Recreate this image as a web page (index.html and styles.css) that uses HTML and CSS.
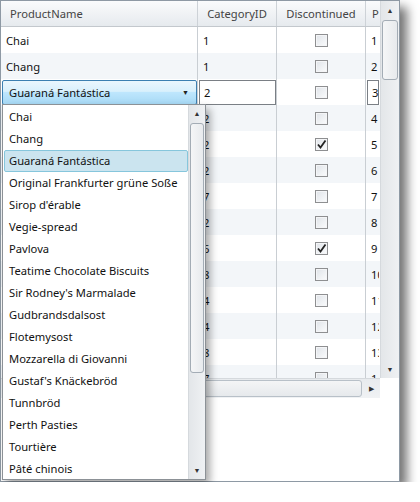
FILE: index.html
```html
<!DOCTYPE html>
<html>
<head>
<meta charset="utf-8">
<link rel="stylesheet" href="styles.css">
</head>
<body>
<div class="window">
  <div class="main">
    <div class="grid">
      <div class="row hdr">
        <div class="cell">ProductName</div>
        <div class="cell">CategoryID</div>
        <div class="cell">Discontinued</div>
        <div class="cell">ProductID</div>
      </div>
      <div class="row"><div class="cell">Chai</div><div class="cell">1</div><div class="cell chk"><span class="box"></span></div><div class="cell">1</div></div>
      <div class="row alt"><div class="cell">Chang</div><div class="cell">1</div><div class="cell chk"><span class="box"></span></div><div class="cell">2</div></div>
      <div class="row edit">
        <div class="cell combo-cell"><div class="combo"><span>Guaraná Fantástica</span><span class="arr">▼</span></div></div>
        <div class="cell tb-cell"><div class="tb">2</div></div>
        <div class="cell chk"><span class="box"></span></div>
        <div class="cell tb-cell"><div class="tb">3</div></div>
      </div>
      <div class="row alt"><div class="cell"></div><div class="cell">2</div><div class="cell chk"><span class="box"></span></div><div class="cell">4</div></div>
      <div class="row"><div class="cell"></div><div class="cell">2</div><div class="cell chk"><span class="box on"><svg viewBox="0 0 13 13" width="13" height="13"><path d="M3 6.5 L5.5 9.5 L10.5 2.5" fill="none" stroke="#222" stroke-width="1.8"/></svg></span></div><div class="cell">5</div></div>
      <div class="row alt"><div class="cell"></div><div class="cell">2</div><div class="cell chk"><span class="box"></span></div><div class="cell">6</div></div>
      <div class="row"><div class="cell"></div><div class="cell">7</div><div class="cell chk"><span class="box"></span></div><div class="cell">7</div></div>
      <div class="row alt"><div class="cell"></div><div class="cell">2</div><div class="cell chk"><span class="box"></span></div><div class="cell">8</div></div>
      <div class="row"><div class="cell"></div><div class="cell">6</div><div class="cell chk"><span class="box on"><svg viewBox="0 0 13 13" width="13" height="13"><path d="M3 6.5 L5.5 9.5 L10.5 2.5" fill="none" stroke="#222" stroke-width="1.8"/></svg></span></div><div class="cell">9</div></div>
      <div class="row alt"><div class="cell"></div><div class="cell">8</div><div class="cell chk"><span class="box"></span></div><div class="cell">10</div></div>
      <div class="row"><div class="cell"></div><div class="cell">4</div><div class="cell chk"><span class="box"></span></div><div class="cell">11</div></div>
      <div class="row alt"><div class="cell"></div><div class="cell">4</div><div class="cell chk"><span class="box"></span></div><div class="cell">12</div></div>
      <div class="row"><div class="cell"></div><div class="cell">8</div><div class="cell chk"><span class="box"></span></div><div class="cell">13</div></div>
      <div class="row alt"><div class="cell"></div><div class="cell">7</div><div class="cell chk"><span class="box"></span></div><div class="cell">14</div></div>
    </div>
    <div class="vscroll">
      <div class="btn">▲</div>
      <div class="thumb vthumb"></div>
      <div class="track"></div>
      <div class="btn">▼</div>
    </div>
  </div>
  <div class="hrow">
    <div class="hscroll"><div class="hthumb"></div><div class="hbtn">▶</div></div>
    <div class="corner"></div>
  </div>
  <div class="popup">
    <ul class="items">
      <li>Chai</li>
      <li>Chang</li>
      <li class="sel">Guaraná Fantástica</li>
      <li>Original Frankfurter grüne Soße</li>
      <li>Sirop d'érable</li>
      <li>Vegie-spread</li>
      <li>Pavlova</li>
      <li>Teatime Chocolate Biscuits</li>
      <li>Sir Rodney's Marmalade</li>
      <li>Gudbrandsdalsost</li>
      <li>Flotemysost</li>
      <li>Mozzarella di Giovanni</li>
      <li>Gustaf's Knäckebröd</li>
      <li>Tunnbröd</li>
      <li>Perth Pasties</li>
      <li>Tourtière</li>
      <li>Pâté chinois</li>
    </ul>
    <div class="pscroll">
      <div class="btn">▲</div>
      <div class="thumb pthumb"></div>
      <div class="track"></div>
      <div class="btn">▼</div>
    </div>
  </div>
</div>
</body>
</html>
```

FILE: styles.css
```css
* { box-sizing: border-box; }
html, body { margin: 0; padding: 0; background: #fff; }
body {
  font-family: "Noto Sans", "Open Sans", sans-serif;
  font-size: 11.2px;
  color: #111;
}
.window {
  position: relative;
  width: 400px;
  height: 482px;
  border: 1px solid #8e99a4;
  background: #fff;
  box-shadow: 7px 7px 10px rgba(0,0,0,0.55);
}
.main {
  display: flex;
  height: 377px;
}
.grid {
  width: 379px;
  overflow: hidden;
}
.row {
  display: grid;
  grid-template-columns: 197px 79px 89px 13px;
  height: 26px;
  background: #fff;
}
.row.alt { background: #f3f6f9; }
.cell {
  border-right: 1px solid #c9ced3;
  padding-left: 5px;
  display: flex;
  align-items: center;
  white-space: nowrap;
  overflow: hidden;
  color: #111;
}
.row .cell:nth-child(4) { border-right: 0; }
.hdr {
  background: linear-gradient(#fafbfc, #e6eaee);
  border-bottom: 1px solid #c3c8cd;
}
.hdr .cell { justify-content: center; padding-left: 0; border-right-color: #cdd2d7; color: #444; }
.hdr .cell:first-child { justify-content: flex-start; padding-left: 9px; }
.hdr .cell:last-child { justify-content: flex-start; padding-left: 6px; }
.chk { justify-content: center; padding-left: 0; }
.box {
  width: 13px;
  height: 13px;
  border: 1px solid #8e8f91;
  background: linear-gradient(135deg, #dfe3e8, #fbfcfd);
  box-shadow: inset 0 0 0 1px #f4f5f7;
  display: block;
  position: relative;
}
.box svg { position: absolute; left: -1px; top: -1px; }
.edit .cell { padding: 0; }
.combo-cell { padding: 1px 0 0 1px !important; }
.combo {
  width: 195px;
  height: 25px;
  border: 1px solid #3c7fb1;
  border-radius: 2px;
  background: linear-gradient(#eaf6fd 0%, #d9f0fc 45%, #bee6fd 50%, #a7d9f5 100%);
  display: flex;
  align-items: center;
  justify-content: space-between;
  padding: 0 7px 0 6px;
}
.arr { font-size: 7px; color: #222; }
.tb-cell { padding: 1px 0 0 1px !important; align-items: stretch !important; }
.tb {
  flex: 1;
  height: 25px;
  border: 1px solid #7a7f85;
  background: #fff;
  padding-left: 4px;
  display: flex;
  align-items: center;
}
.vscroll {
  width: 19px;
  display: flex;
  flex-direction: column;
  background: linear-gradient(90deg, #e3e6e9, #eff1f3);
  border-left: 1px solid #d5d9dd;
}
.btn {
  height: 18px;
  font-size: 7px;
  color: #333;
  display: flex;
  align-items: center;
  justify-content: center;
}
.thumb {
  margin: 1px 1px 0 1px;
  border: 1px solid #a3acb5;
  border-radius: 3px;
  background: linear-gradient(90deg, #f5f6f7, #e7eaed);
}
.vthumb { height: 60px; }
.track { flex: 1; }
.hrow { display: flex; height: 20px; }
.hscroll {
  width: 379px;
  display: flex;
  background: linear-gradient(#e8ebee, #f0f2f4);
  border-top: 1px solid #d5d9dd;
}
.hthumb {
  flex: 1;
  margin: 1px 0 1px 1px;
  border: 1px solid #b8c0c8;
  border-radius: 3px;
  background: linear-gradient(#f4f5f6, #e6e9ec);
}
.hbtn {
  width: 18px;
  font-size: 7px;
  color: #333;
  display: flex;
  align-items: center;
  justify-content: center;
}
.corner { width: 19px; background: #fff; }
.popup {
  position: absolute;
  left: 1px;
  top: 103px;
  width: 204px;
  height: 376px;
  border: 1px solid #8c9196;
  background: #fff;
  display: flex;
  box-shadow: 4px 5px 8px rgba(0,0,0,0.35);
}
.items {
  list-style: none;
  margin: 0;
  padding: 1px 0 0 1px;
  width: 185px;
  overflow: hidden;
}
.items li {
  height: 22px;
  line-height: 20px;
  padding-left: 4px;
  border: 1px solid transparent;
  white-space: nowrap;
}
.items li.sel {
  background: #cbe4ef;
  border-color: #86c6dc;
  border-radius: 2px;
}
.pscroll {
  width: 17px;
  display: flex;
  flex-direction: column;
  background: linear-gradient(90deg, #e3e6e9, #eff1f3);
  border-left: 1px solid #d5d9dd;
}
.pscroll .btn { height: 17px; }
.pthumb { height: 250px; }
```
